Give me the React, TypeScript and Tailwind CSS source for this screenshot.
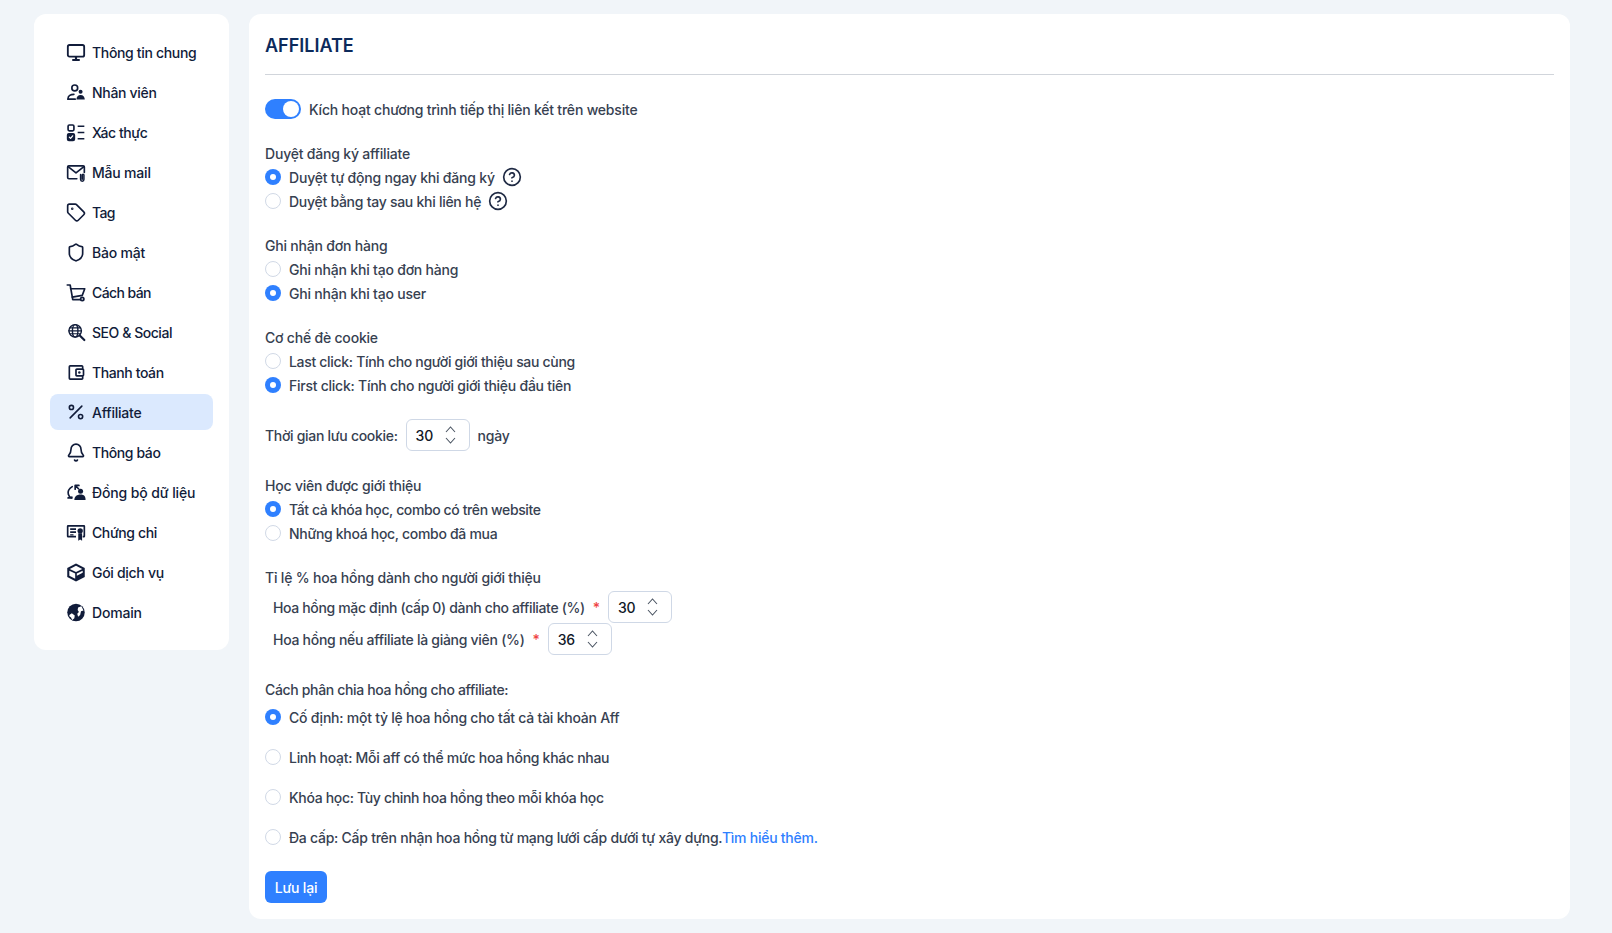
import React from "react";
import { Tag, Shield, Percent, Bell } from "lucide-react";
import { MdOutlineAccountBalanceWallet } from "react-icons/md";

const Stroke = ({ children, w = 2 }: { children: React.ReactNode; w?: number }) => (
  <svg width="21" height="21" viewBox="0 0 24 24" fill="none" stroke="currentColor" strokeWidth={w} strokeLinecap="round" strokeLinejoin="round">{children}</svg>
);

const icons: Record<string, React.ReactNode> = {
  monitor: (
    <Stroke w={2.200}>
      <rect x="2.200" y="3" width="19.600" height="14" rx="2" />
      <path d="M12 17v3.500M7.500 21h9" strokeWidth="2.600" strokeLinecap="butt" />
    </Stroke>
  ),
  staff: (
    <Stroke>
      <circle cx="10.500" cy="6.500" r="3.500" />
      <path d="M2.500 20v-1c0-3 3-4.800 7-4.800" />
      <path d="M2.500 20h8.500" />
      <circle cx="17.500" cy="11" r="2.400" fill="currentColor" stroke="none" />
      <path d="M12.500 20.500c0-3.500 2-5.500 5-5.500s5 2 5 5.500z" fill="currentColor" stroke="none" />
    </Stroke>
  ),
  check: (
    <Stroke>
      <rect x="2.500" y="3" width="7" height="7" rx="1.500" />
      <rect x="2" y="13.500" width="8" height="8" rx="1.500" fill="currentColor" />
      <path d="M4 17.500l1.500 1.500 2.500-3" stroke="white" strokeWidth="1.500" />
      <path d="M14 4.500h8M14 12h8M14 19.500h8" strokeLinecap="butt" />
    </Stroke>
  ),
  mail: (
    <Stroke>
      <path d="M13 19.500H3.500a1.500 1.500 0 0 1-1.500-1.500V5.500A1.500 1.500 0 0 1 3.500 4h17A1.500 1.500 0 0 1 22 5.500V12" />
      <path d="M2.500 5l9.500 7.500L21.500 5" />
      <path d="M17.500 14.500v6a2 2 0 0 0 4 0v-5.500a1 1 0 0 0-2 0v5" strokeWidth="1.800" />
    </Stroke>
  ),
  tag: <Tag size={21} strokeWidth={2} />,
  shield: <Shield size={21} strokeWidth={2} />,
  cart: (
    <Stroke>
      <path d="M1.500 3h3.500l3 17" />
      <path d="M5.500 7.500H22.500L19.500 15.500 7.500 17.500" />
      <path d="M8 20.500h9" />
      <circle cx="19.500" cy="19.800" r="2" />
    </Stroke>
  ),
  seo: (
    <Stroke w={1.700}>
      <circle cx="11" cy="10" r="7.500" />
      <ellipse cx="11" cy="10" rx="3.300" ry="7.500" />
      <path d="M3.500 10h15M4.500 6.500h13M4.500 13.500h13" strokeWidth="1.400" />
      <path d="M16.500 15.500L22 21" strokeWidth="2.600" />
    </Stroke>
  ),
  wallet: <MdOutlineAccountBalanceWallet size={21} />,
  percent: <Percent size={22} strokeWidth={1.900} />,
  bell: <Bell size={21} strokeWidth={2} />,
  sync: (
    <Stroke>
      <path d="M7.500 5C3.500 7.500 2 11 2.800 14c.5 2 1.700 3.500 3.700 4.500" />
      <path d="M2.500 18.500H7v-1" />
      <path d="M11 3.500h4.500M11 3.500V8M11 3.500L15 7.500" />
      <circle cx="17.500" cy="10.500" r="3" fill="currentColor" stroke="none" />
      <path d="M10 21c0-4 3-6.500 7.500-6.500S23.500 17 23.500 21z" fill="currentColor" stroke="none" />
    </Stroke>
  ),
  cert: (
    <svg width="21" height="21" viewBox="0 0 24 24" fill="currentColor">
      <path d="M2.500 3h19A1.500 1.500 0 0 1 23 4.500v12a1.500 1.500 0 0 1-1.500 1.500H20v-2h1V5H3v11h9v2H2.500A1.500 1.500 0 0 1 1 16.500v-12A1.500 1.500 0 0 1 2.500 3z" />
      <path d="M5 7h7v2H5zM5 10.500h7v2H5zM5 14h4v1.500H5z" />
      <circle cx="17" cy="10" r="3.200" />
      <path d="M14.700 13h4.600v9l-2.300-1.500-2.300 1.500z" />
    </svg>
  ),
  box: (
    <svg width="21" height="21" viewBox="0 0 24 24" fill="currentColor">
      <path d="M12 1.200L22.500 6.700v10.800L12 22.800 1.500 17.500V6.700z" />
      <path d="M12 4l7.500 3.700-7.500 3.800-7.500-3.800z" fill="white" />
      <path d="M11 13.300v6.200L4 16V9.800z" fill="white" />
      <path d="M13 13.300l7-3.500v2.600l-7 3.400z" fill="white" />
    </svg>
  ),
  domain: (
    <svg width="21" height="21" viewBox="0 0 24 24" fill="none">
      <circle cx="12" cy="12" r="10.500" fill="currentColor" />
      <path d="M4 15l3-2 3.500 2.500-.5 3.500-2.500 2-1.500-3-2-1.500zM14.500 6l4-1.500 2.500 5-3 1-1 4.500-2.500 2-1-3.500 2-2-1.500-2.500z" fill="white" />
    </svg>
  ),
};

const nav: [string, string, string][] = [
  ["monitor", "Thông tin chung", "tracking-[-0.33px]"],
  ["staff", "Nhân viên", "tracking-[-0.3px]"],
  ["check", "Xác thực", "tracking-[-0.45px]"],
  ["mail", "Mẫu mail", "tracking-[-0.2px]"],
  ["tag", "Tag", "tracking-[-0.6px]"],
  ["shield", "Bảo mật", "tracking-[-0.2px]"],
  ["cart", "Cách bán", "tracking-[-0.6px]"],
  ["seo", "SEO & Social", "tracking-[-0.45px]"],
  ["wallet", "Thanh toán", "tracking-[-0.4px]"],
  ["percent", "Affiliate", "tracking-[-0.2px]"],
  ["bell", "Thông báo", "tracking-[-0.4px]"],
  ["sync", "Đồng bộ dữ liệu", "tracking-[-0.12px]"],
  ["cert", "Chứng chỉ", "tracking-[-0.4px]"],
  ["box", "Gói dịch vụ", "tracking-[-0.3px]"],
  ["domain", "Domain", "tracking-[-0.2px]"],
];

const Help = () => (
  <svg width="20" height="20" viewBox="0 0 24 24" fill="none" stroke="#1f2a44" strokeWidth="2" strokeLinecap="round" strokeLinejoin="round">
    <circle cx="12" cy="12" r="10" />
    <path d="M9.100 9a3 3 0 0 1 5.800 1c0 2-3 3-3 3" />
    <path d="M12 17h.01" />
  </svg>
);

const Radio = ({ on, label, help, tr = "" }: { on?: boolean; label: React.ReactNode; help?: boolean; tr?: string }) => (
  <div className="flex items-center h-6">
    <span className={on ? "w-4 h-4 rounded-full bg-[#2f80ff] flex items-center justify-center shrink-0" : "w-4 h-4 rounded-full border border-[#d1d9e6] bg-white shrink-0"}>
      {on && <span className="w-1.5 h-1.5 rounded-full bg-white" />}
    </span>
    <span className={`ml-2 ${tr}`}>{label}</span>
    {help && <span className="ml-[7px] flex"><Help /></span>}
  </div>
);

const Num = ({ value }: { value: string }) => (
  <div className="w-16 h-8 rounded-md border border-[#cfd8e6] bg-white flex items-center justify-between pl-[9px] pr-[13px] text-[14px] font-medium text-[#111827]">
    <span>{value}</span>
    <span className="flex flex-col gap-[4px] text-[#4b5563]">
      <svg width="11" height="7" viewBox="0 0 11 7" fill="none" stroke="currentColor" strokeWidth="1.100"><path d="M1 6l4.500-5L10 6" /></svg>
      <svg width="11" height="7" viewBox="0 0 11 7" fill="none" stroke="currentColor" strokeWidth="1.100"><path d="M1 1l4.500 5L10 1" /></svg>
    </span>
  </div>
);

export default function App() {
  return (
    <div className="min-h-[933px] bg-[#f1f5f9] flex items-start gap-5 pl-[34px] pr-[42px] pt-[14px] font-['Inter',sans-serif] text-[14px] tracking-[-0.2px] font-medium text-[#374151]">
      <aside className="w-[195px] shrink-0 bg-white rounded-xl px-4 py-5 flex flex-col gap-1">
        {nav.map(([icon, label, tr]) => (
          <div key={label} className={`h-9 rounded-lg flex items-center pl-4 text-[#111c3a] ${label === "Affiliate" ? "bg-[#dbe9fe]" : ""}`}>
            <span className="w-5 mr-1.5 shrink-0 flex items-center justify-center">{icons[icon]}</span>
            <span className={tr}>{label}</span>
          </div>
        ))}
      </aside>

      <main className="flex-1 bg-white rounded-xl px-4 pb-4 h-[905px]">
        <h1 className="h-[61px] pt-[2px] border-b border-[#d1d5db] flex items-center text-[18px] tracking-normal font-semibold text-[#0c2a5b]">AFFILIATE</h1>

        <div className="mt-[24px] flex items-center h-5">
          <span className="w-9 h-5 rounded-full bg-[#2f80ff] flex items-center justify-end pr-0.5 shrink-0">
            <span className="w-4 h-4 rounded-full bg-white" />
          </span>
          <span className="ml-2">Kích hoạt chương trình tiếp thị liên kết trên website</span>
        </div>

        <section className="mt-[22px]">
          <div className="h-6 flex items-center">Duyệt đăng ký affiliate</div>
          <Radio on label="Duyệt tự động ngay khi đăng ký" help />
          <Radio label="Duyệt bằng tay sau khi liên hệ" help tr="tracking-[-0.27px]" />
        </section>

        <section className="mt-5">
          <div className="h-6 flex items-center">Ghi nhận đơn hàng</div>
          <Radio label="Ghi nhận khi tạo đơn hàng" />
          <Radio on label="Ghi nhận khi tạo user" />
        </section>

        <section className="mt-5">
          <div className="h-6 flex items-center">Cơ chế đè cookie</div>
          <Radio label="Last click: Tính cho người giới thiệu sau cùng" tr="tracking-[-0.31px]" />
          <Radio on label="First click: Tính cho người giới thiệu đầu tiên" tr="tracking-[-0.25px]" />
        </section>

        <div className="mt-[22px] flex items-center gap-2">
          <span className="tracking-[-0.3px]">Thời gian lưu cookie:</span>
          <Num value="30" />
          <span>ngày</span>
        </div>

        <section className="mt-[22px]">
          <div className="h-6 flex items-center">Học viên được giới thiệu</div>
          <Radio on label="Tất cả khóa học, combo có trên website" tr="tracking-[-0.39px]" />
          <Radio label="Những khoá học, combo đã mua" tr="tracking-[-0.31px]" />
        </section>

        <section className="mt-5">
          <div className="h-6 flex items-center">Tỉ lệ % hoa hồng dành cho người giới thiệu</div>
          <div className="pl-2 flex flex-col mt-[2px]">
            <div className="flex items-center h-8">
              <span className="tracking-[-0.35px]">Hoa hồng mặc định (cấp 0) dành cho affiliate (%)</span>
              <span className="text-[#ef4444] ml-2">*</span>
              <span className="ml-2"><Num value="30" /></span>
            </div>
            <div className="flex items-center h-8">
              <span className="tracking-[-0.28px]">Hoa hồng nếu affiliate là giảng viên (%)</span>
              <span className="text-[#ef4444] ml-2">*</span>
              <span className="ml-2"><Num value="36" /></span>
            </div>
          </div>
        </section>

        <section className="mt-[22px]">
          <div className="h-6 flex items-center tracking-[-0.34px]">Cách phân chia hoa hồng cho affiliate:</div>
          <div className="mt-1 flex flex-col gap-4">
            <Radio on label="Cố định: một tỷ lệ hoa hồng cho tất cả tài khoản Aff" tr="tracking-[-0.24px]" />
            <Radio label="Linh hoạt: Mỗi aff có thể mức hoa hồng khác nhau" tr="tracking-[-0.29px]" />
            <Radio label="Khóa học: Tùy chỉnh hoa hồng theo mỗi khóa học" tr="tracking-[-0.33px]" />
            <Radio label={<>Đa cấp: Cấp trên nhận hoa hồng từ mạng lưới cấp dưới tự xây dựng.<span className="text-[#2f80ff]">Tìm hiểu thêm.</span></>} tr="tracking-[-0.25px]" />
          </div>
        </section>

        <button className="mt-[22px] w-[62px] h-8 rounded-md bg-[#2f80ff] text-white text-[14px] font-medium">Lưu lại</button>
      </main>
    </div>
  );
}
